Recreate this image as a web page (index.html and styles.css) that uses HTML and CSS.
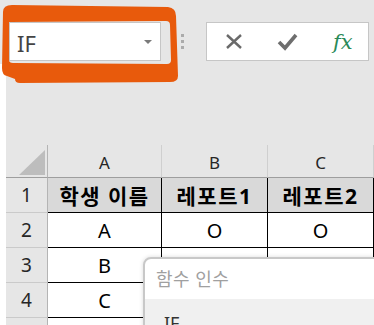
FILE: index.html
```html
<!DOCTYPE html>
<html lang="ko">
<head>
    <meta charset="UTF-8">
    <title>함수 인수</title>
    <link rel="stylesheet" href="styles.css">
</head>
<body>
<div class="toolbar">
    <div class="name-box">
        <span class="name-text">IF</span>
        <span class="name-arrow"></span>
    </div>
    <div class="grip">
        <span></span><span></span><span></span>
    </div>
    <div class="formula-box">
        <svg class="icon" width="20" height="20" viewBox="0 0 20 20">
            <path d="M3 3 L17 16 M17 3 L3 16" stroke="#6a6a6a" stroke-width="2.4" fill="none"/>
        </svg>
        <svg class="icon" width="22" height="20" viewBox="0 0 22 20">
            <path d="M2 10 L8 16 L19 3" stroke="#6e6e6e" stroke-width="3.6" fill="none"/>
        </svg>
        <span class="fx">fx</span>
    </div>
</div>
<div class="workspace">
    <div class="sheet">
        <div class="corner">
            <svg width="26" height="25" viewBox="0 0 26 25"><polygon points="26,0 26,25 0,25" fill="#bdbdbd"/></svg>
        </div>
        <div class="col-head">A</div>
        <div class="col-head">B</div>
        <div class="col-head">C</div>

        <div class="row-head">1</div>
        <div class="cell title">학생 이름</div>
        <div class="cell title">레포트1</div>
        <div class="cell title">레포트2</div>

        <div class="row-head">2</div>
        <div class="cell">A</div>
        <div class="cell">O</div>
        <div class="cell">O</div>

        <div class="row-head">3</div>
        <div class="cell">B</div>
        <div class="cell"></div>
        <div class="cell"></div>

        <div class="row-head">4</div>
        <div class="cell">C</div>
        <div class="cell"></div>
        <div class="cell"></div>

        <div class="row-head"></div>
        <div class="cell"></div>
        <div class="cell"></div>
        <div class="cell"></div>
    </div>
</div>

<div class="dialog">
    <div class="dialog-title">함수 인수</div>
    <div class="dialog-body">IF</div>
</div>

<svg class="mark" width="190" height="90" viewBox="0 0 190 90">
    <path fill="#e85a0c" fill-rule="evenodd" d="M3 12 Q3 5 12 5 L168 7 Q176 8 176 16 L178 76 Q178 82 170 82 L20 83 Q15 83 15 79 L7 76 Q2 75 2 68 Z M9 22 L166 21 Q170 21 170 25 L171 60 Q171 64 167 64 L13 63 Q9 63 9 60 Z"/>
</svg>
</body>
</html>
```

FILE: styles.css
```css
body {
    margin: 0;
    width: 374px;
    height: 325px;
    overflow: hidden;
    position: relative;
    background-color: #e6e6e6;
    font-family: "Noto Sans", "Noto Sans CJK KR", sans-serif;
}
.toolbar {
    display: flex;
    align-items: center;
    padding: 22px 0 0 9px;
}
.name-box {
    box-sizing: border-box;
    width: 152px;
    height: 39px;
    background-color: #fff;
    border: 1px solid #c6c6c6;
    display: flex;
    align-items: center;
    justify-content: space-between;
    padding: 0 8px 0 7px;
}
.name-text {
    font-size: 22px;
    color: #444;
    padding-top: 2px;
}
.name-arrow {
    width: 0;
    height: 0;
    border-left: 4px solid transparent;
    border-right: 4px solid transparent;
    border-top: 4px solid #7a7a7a;
}
.grip {
    display: flex;
    flex-direction: column;
    gap: 3px;
    margin-left: 20px;
}
.grip span {
    width: 3px;
    height: 3px;
    background-color: #ababab;
}
.formula-box {
    box-sizing: border-box;
    width: 163px;
    height: 39px;
    margin-left: 22px;
    background-color: #fff;
    border: 1px solid #c6c6c6;
    display: flex;
    align-items: center;
    padding-left: 17px;
    gap: 33px;
}
.fx {
    font-family: "DejaVu Serif", serif;
    font-style: italic;
    font-size: 21px;
    color: #2a8a58;
    margin-left: 1px;
}
.workspace {
    margin-top: 3px;
    padding-top: 81px;
    border-left: 6px solid #fff;
    height: 300px;
}
.sheet {
    display: grid;
    grid-template-columns: 42px 114px 106px 106px;
    grid-template-rows: 33px 35px 35px 35px 35px 35px;
}
.sheet > div {
    box-sizing: border-box;
    display: flex;
    align-items: center;
    justify-content: center;
}
.corner {
    justify-content: flex-end !important;
    align-items: flex-end !important;
    padding: 0 2px 2px 0;
    border-right: 1px solid #b4b4b4;
    border-bottom: 1px solid #9e9e9e;
}
.col-head {
    font-size: 17px;
    color: #262626;
    border-right: 1px solid #cfcfcf;
    border-bottom: 1px solid #9e9e9e;
    padding-top: 2px;
}
.row-head {
    font-size: 19px;
    color: #262626;
    border-right: 1px solid #b4b4b4;
    border-bottom: 1px solid #cacaca;
}
.cell {
    font-size: 20px;
    color: #000;
    background-color: #fff;
    border-right: 1px solid #000;
    border-bottom: 1px solid #000;
}
.cell.title {
    background-color: #d9d9d9;
    font-weight: bold;
    font-size: 21px;
    letter-spacing: 1.5px;
}
.dialog {
    position: absolute;
    left: 143px;
    top: 257px;
    width: 260px;
    height: 100px;
    background-color: #fff;
    border: 2px solid #c8c8c8;
    border-radius: 8px;
    box-shadow: 0 0 4px rgba(0, 0, 0, 0.15);
    overflow: hidden;
}
.dialog-title {
    height: 40px;
    padding-left: 11px;
    font-size: 18px;
    line-height: 40px;
    letter-spacing: 0.5px;
    color: #a0a0a0;
}
.dialog-body {
    background-color: #f0f0f0;
    height: 60px;
    padding: 12px 0 0 19px;
    font-size: 18px;
    color: #333;
}
.mark {
    position: absolute;
    left: 0;
    top: 0;
}
```
